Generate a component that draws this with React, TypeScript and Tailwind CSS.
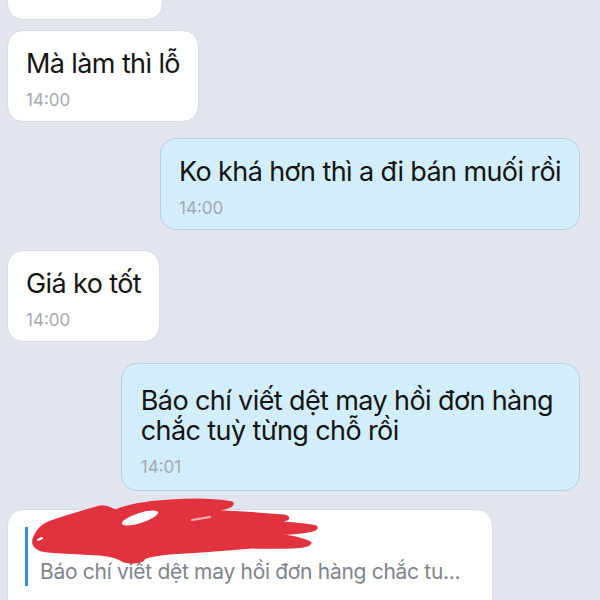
import React from 'react';

const font = { fontFamily: 'Inter, "Noto Sans", sans-serif' };

function Bubble({
  mine,
  text,
  time,
  pad = 'px-[18px] pt-[18px] pb-[12px]',
  className = '',
}: {
  mine?: boolean;
  text: React.ReactNode;
  time: string;
  pad?: string;
  className?: string;
}) {
  return (
    <div
      className={
        'rounded-[16px] border ' +
        pad +
        ' ' +
        (mine
          ? 'self-end mr-[20px] bg-[#d3eefb] border-[#b8cde0] '
          : 'self-start ml-[7px] bg-white border-[#d8dbe5] ') +
        className
      }
    >
      <div className="text-[27px] leading-[30px] text-[#141414] tracking-[-0.6px]">{text}</div>
      <div className="mt-[12px] text-[17px] leading-[18px] text-[#a4a8b1]">{time}</div>
    </div>
  );
}

// red marker scribble hiding the quoted sender's name
function Scribble() {
  return (
    <svg
      className="absolute left-[20px] top-[494px]"
      width="320"
      height="80"
      viewBox="0 0 320 80"
    >
      <path
        d="M14 45 C 18 34, 26 29, 34 27 C 48 22, 62 18, 80 13 C 88 12, 92 16, 96 17 C 104 13, 120 9, 150 7 C 175 5, 200 6, 212 9 C 214 13, 200 15, 188 17 C 205 18, 230 19, 264 22 C 272 24, 268 27, 244 28 C 262 29, 285 30, 296 33 C 298 37, 280 39, 252 40 C 265 42, 282 44, 290 49 C 288 53, 272 54, 238 53 C 215 54, 190 57, 150 59 C 138 60, 128 62, 124 64 C 122 68, 112 69, 104 67 C 98 63, 92 61, 80 60 C 62 59, 40 58, 28 57 C 18 56, 12 52, 14 45 Z"
        fill="#e1333f"
        stroke="#e1333f"
        strokeWidth="3"
        strokeLinejoin="round"
      />
      <ellipse cx="120" cy="24" rx="19" ry="5" transform="rotate(-18 120 24)" fill="#ffffff" />
      <path d="M172 26 L190 23" stroke="#f3b0b5" strokeWidth="2" strokeLinecap="round" />
      <path d="M18 46 L22 44" stroke="#ffffff" strokeWidth="2" strokeLinecap="round" />
    </svg>
  );
}

export default function App() {
  return (
    <div
      className="relative w-[600px] h-[600px] overflow-hidden bg-[#e2e5ee] flex flex-col"
      style={font}
    >
      <div className="ml-[7px] mt-[-40px] w-[156px] h-[60px] rounded-[16px] bg-white border border-[#d8dbe5] shrink-0" />

      <Bubble text="Mà làm thì lỗ" time="14:00" className="mt-[10px] shrink-0" />
      <Bubble mine text="Ko khá hơn thì a đi bán muối rồi" time="14:00" className="mt-[16px] shrink-0" />
      <Bubble text="Giá ko tốt" time="14:00" className="mt-[20px] shrink-0" />
      <Bubble
        mine
        pad="pl-[19px] pr-[26px] pt-[22px] pb-[14px]"
        text={
          <>
            Báo chí viết dệt may hồi đơn hàng
            <br />
            chắc tuỳ từng chỗ rồi
          </>
        }
        time="14:01"
        className="mt-[21px] shrink-0"
      />

      <div className="flex mt-[18px] shrink-0">
        <div className="ml-[7px] w-[486px] h-[110px] rounded-t-[16px] bg-white border border-[#d8dbe5] px-[17px] pt-[17px]">
          <div className="flex">
            <div className="w-[3px] h-[59px] bg-[#3a8fd0]" />
            <div className="flex-1 pl-[12px] pt-[33px]">
              <div className="text-[21px] leading-[24px] tracking-[-0.3px] text-[#7f838b] whitespace-nowrap">
                Báo chí viết dệt may hồi đơn hàng chắc tu...
              </div>
            </div>
          </div>
        </div>
      </div>

      <Scribble />
    </div>
  );
}
